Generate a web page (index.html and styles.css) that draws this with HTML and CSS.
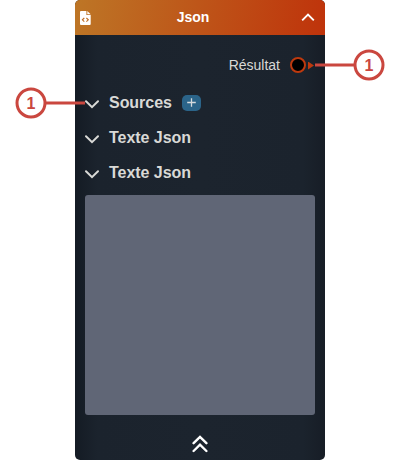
FILE: index.html
```html
<!DOCTYPE html>
<html lang="fr">
<head>
<meta charset="utf-8">
<title>Json</title>
<link rel="stylesheet" href="styles.css">
</head>
<body>
<main class="node">
  <header class="header">
    <svg class="file" width="11" height="14" viewBox="0 0 11 14"><path d="M1 0H6.4V4H10.7V13Q10.7 14 9.7 14H1Q0 14 0 13V1Q0 0 1 0ZM7.3 0L10.7 3.2H7.3Z" fill="#fff"/><path d="M4.3 7L2.4 8.8L4.3 10.6M6.4 7L8.3 8.8L6.4 10.6" fill="none" stroke="#bd6b22" stroke-width="1.1"/></svg>
    <h1 class="title">Json</h1>
    <svg class="up" width="14" height="9" viewBox="0 0 14 9"><path d="M1.2 7.4L7 1.6L12.8 7.4" fill="none" stroke="#fff" stroke-width="1.9"/></svg>
  </header>
  <div class="result">
    <span>Résultat</span>
    <i class="port"></i>
    <i class="arrow"></i>
  </div>
  <section class="row">
    <svg class="chevron" width="14" height="9" viewBox="0 0 14 9"><path d="M1 1.2L7 7.2L13 1.2" fill="none" stroke="#d9d9d6" stroke-width="2" stroke-linecap="round"/></svg>
    <h2 class="label">Sources</h2>
    <span class="add"><svg width="9" height="9" viewBox="0 0 9 9"><path d="M4.5 0.2V8.8M0.2 4.5H8.8" stroke="#d5dadd" stroke-width="1.3"/></svg></span>
  </section>
  <section class="row">
    <svg class="chevron" width="14" height="9" viewBox="0 0 14 9"><path d="M1 1.2L7 7.2L13 1.2" fill="none" stroke="#d9d9d6" stroke-width="2" stroke-linecap="round"/></svg>
    <h2 class="label">Texte Json</h2>
  </section>
  <section class="row">
    <svg class="chevron" width="14" height="9" viewBox="0 0 14 9"><path d="M1 1.2L7 7.2L13 1.2" fill="none" stroke="#d9d9d6" stroke-width="2" stroke-linecap="round"/></svg>
    <h2 class="label">Texte Json</h2>
  </section>
  <div class="editor"></div>
  <footer class="footer">
    <svg width="16" height="18" viewBox="0 0 16 18"><path d="M1.6 8.2L8 1.9L14.4 8.2M1.6 16L8 9.7L14.4 16" fill="none" stroke="#fff" stroke-width="2.4" stroke-linecap="round"/></svg>
  </footer>
</main>
<svg class="callout callout-left" width="70" height="32" viewBox="0 0 70 32"><path d="M30 16H70"/><circle cx="16" cy="16" r="14"/><text x="16" y="22">1</text></svg>
<svg class="callout callout-right" width="70" height="32" viewBox="0 0 70 32"><path d="M0 16H40"/><circle cx="54" cy="16" r="14"/><text x="54" y="22">1</text></svg>
</body>
</html>
```
FILE: styles.css
```css
* { box-sizing: border-box; }
body {
  position: relative;
  width: 400px;
  height: 460px;
  margin: 0;
  overflow: hidden;
  background: #fff;
  font-family: "Liberation Sans", Arial, sans-serif;
}
svg { display: block; flex: none; }
.node {
  display: flex;
  flex-direction: column;
  width: 250px;
  height: 460px;
  margin: 0 auto;
  overflow: hidden;
  border-radius: 5px;
  color: #d9d9d6;
  background: linear-gradient(90deg, #141b24 0, #1b232d 22px, #1c242e 50%, #1b232d 228px, #171d26 100%);
}
.header {
  display: flex;
  align-items: center;
  height: 35px;
  padding: 0 10px 0 5px;
  background: linear-gradient(100deg, #bd7626, #bf330b);
}
.file { margin-top: 1px; }
.title {
  flex: 1;
  margin: 0;
  padding: 0 6px 2px 0;
  color: #fff;
  font-size: 14px;
  line-height: 20px;
  text-align: center;
}
.up { margin-top: -1px; }
.result {
  display: flex;
  align-items: center;
  justify-content: flex-end;
  height: 50px;
  margin-top: 5px;
  padding-right: 11px;
  font-size: 14px;
}
.port {
  width: 16px;
  height: 16px;
  margin-left: 10px;
  border: 2px solid #bd390e;
  border-radius: 50%;
  background: #000;
}
.arrow {
  width: 6px;
  height: 8px;
  margin: 1px 0 0 2px;
  background: #bd390e;
  clip-path: polygon(0 0, 100% 50%, 0 100%);
}
.row {
  display: flex;
  align-items: center;
  height: 35px;
  padding-left: 10px;
}
.result + .row { margin-top: -5px; }
.chevron { margin-top: 3px; }
.label {
  margin: 0 0 0 10px;
  font-size: 16px;
  line-height: 20px;
  letter-spacing: -0.04px;
}
.add {
  display: flex;
  align-items: center;
  justify-content: center;
  width: 19px;
  height: 16px;
  margin-left: 10.3px;
  border-radius: 5px;
  background: #2b6489;
}
.editor {
  height: 220px;
  margin: 5px 10px 0;
  border-radius: 3px;
  background: #606676;
}
.footer {
  display: flex;
  justify-content: center;
  padding-top: 20px;
}
.callout {
  position: absolute;
  fill: none;
  stroke: #ca473f;
  stroke-width: 3px;
}
.callout circle { fill: #fff; }
.callout text {
  fill: #ca473f;
  stroke: none;
  font-size: 16px;
  font-weight: bold;
  text-anchor: middle;
}
.callout-left { top: 87px; left: 15px; }
.callout-right { top: 49px; left: 315px; }
```
